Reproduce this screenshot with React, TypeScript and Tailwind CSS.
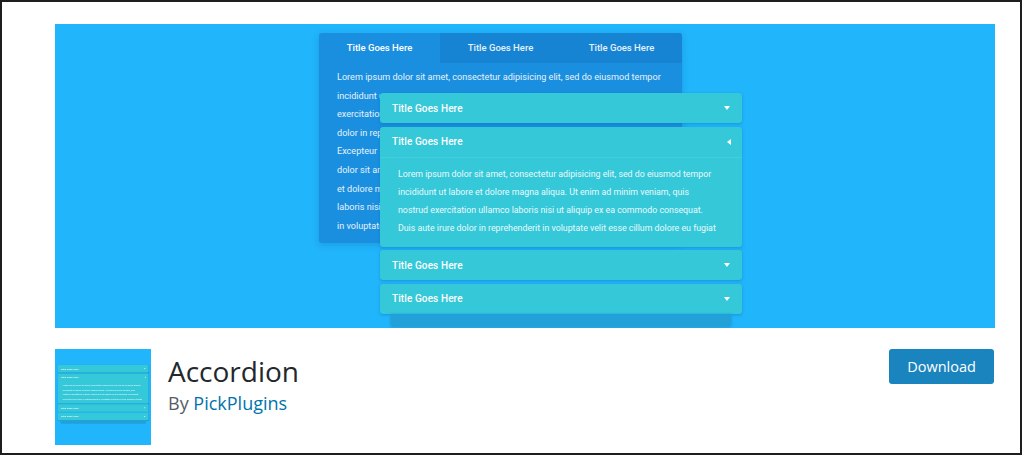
import React from "react";

const tabLines = [
  "Lorem ipsum dolor sit amet, consectetur adipisicing elit, sed do eiusmod tempor",
  "incididunt ut labore et dolore magna aliqua. Ut enim ad minim veniam, quis nostrud",
  "exercitation ullamco laboris nisi ut aliquip ex ea commodo consequat. Duis aute irure",
  "dolor in reprehenderit in voluptate velit esse cillum dolore eu fugiat nulla pariatur.",
  "Excepteur sint occaecat cupidatat non proident, sunt in culpa qui officia deserunt",
  "dolor sit amet, consectetur adipisicing elit, sed do eiusmod tempor incididunt ut",
  "et dolore magna aliqua. Ut enim ad minim veniam, quis nostrud exercitation ullamco",
  "laboris nisi ut aliquip ex ea commodo consequat. Duis aute irure dolor in",
  "in voluptate velit esse cillum dolore eu fugiat nulla pariatur.",
];

const accLines = [
  "Lorem ipsum dolor sit amet, consectetur adipisicing elit, sed do eiusmod tempor",
  "incididunt ut labore et dolore magna aliqua. Ut enim ad minim veniam, quis",
  "nostrud exercitation ullamco laboris nisi ut aliquip ex ea commodo consequat.",
  "Duis aute irure dolor in reprehenderit in voluptate velit esse cillum dolore eu fugiat",
];

const font = { fontFamily: "Roboto, 'Noto Sans', sans-serif" };

function Down() {
  return (
    <span className="w-0 h-0 border-l-[3.5px] border-r-[3.5px] border-t-[4px] border-l-transparent border-r-transparent border-t-white" />
  );
}
function Left() {
  return (
    <span className="w-0 h-0 border-t-[3.5px] border-b-[3.5px] border-r-[4px] border-t-transparent border-b-transparent border-r-white mr-[-1px]" />
  );
}

function Header({ open }: { open?: boolean }) {
  return (
    <div className="h-[30px] flex items-center justify-between pl-[12px] pr-[12px]">
      <span className="text-[10px] font-medium text-white tracking-[0.1px]">Title Goes Here</span>
      {open ? <Left /> : <Down />}
    </div>
  );
}

function Accordion() {
  return (
    <div className="w-[362px]" style={font}>
      <div className="flex flex-col gap-[3.5px]">
        <div className="bg-[#34c8d8] rounded-[3px] shadow-[0_1px_3px_rgba(10,90,160,0.35)]">
          <Header />
        </div>
        <div className="bg-[#34c8d8] rounded-[3px] shadow-[0_1px_3px_rgba(10,90,160,0.35)]">
          <Header open />
          <div className="border-t border-[#3fd0de] pt-[7px] pb-[10px] pl-[18px] pr-[10px] text-[8.8px] leading-[18px] text-[#eafafc]">
            {accLines.map((l, i) => (
              <div key={i} className="whitespace-nowrap overflow-hidden">{l}</div>
            ))}
          </div>
        </div>
        <div className="bg-[#34c8d8] rounded-[3px] shadow-[0_1px_3px_rgba(10,90,160,0.35)]">
          <Header />
        </div>
        <div className="bg-[#34c8d8] rounded-[3px] shadow-[0_1px_3px_rgba(10,90,160,0.35)]">
          <Header />
        </div>
      </div>
      <div className="mx-[10px] h-[14px] bg-[#22a0d8] rounded-b-[4px] blur-[1px]" />
    </div>
  );
}

function Banner() {
  return (
    <div className="relative w-[940px] h-[304px] bg-[#21b5fb] overflow-hidden" style={font}>
      <div className="ml-[264px] mt-[9px] w-[363px] h-[210px] rounded-[3px] bg-[#1a8fe0] overflow-hidden shadow-[0_2px_6px_rgba(10,80,150,0.25)]">
        <div className="flex h-[30px]">
          <div className="w-[121px] flex items-center justify-center text-[9.5px] font-medium text-white">Title Goes Here</div>
          <div className="w-[121px] flex items-center justify-center text-[9.5px] font-medium text-[#e4f1fb] bg-[#1784d3]">Title Goes Here</div>
          <div className="w-[121px] flex items-center justify-center text-[9.5px] font-medium text-[#e4f1fb] bg-[#1784d3]">Title Goes Here</div>
        </div>
        <div className="pt-[5px] pl-[18px] pr-[14px] text-[9.1px] leading-[18.6px] text-[#e6f2fc]">
          {tabLines.map((l, i) => (
            <div key={i} className={i === 0 ? "whitespace-nowrap overflow-hidden" : "w-[43px] whitespace-nowrap overflow-hidden"}>{l}</div>
          ))}
        </div>
      </div>
      <div className="absolute left-[325px] top-[69px]">
        <Accordion />
      </div>
    </div>
  );
}

function Thumb() {
  return (
    <div className="w-[96px] h-[96px] bg-[#21b5fb] overflow-hidden">
      <div className="w-[384px] h-[384px] origin-top-left scale-[0.25] pl-[12px] pt-[64px]">
        <Accordion />
      </div>
    </div>
  );
}

export default function App() {
  return (
    <div className="w-[1022px] h-[455px] bg-white border-2 border-[#1e1e1e] pl-[53px] pt-[22px] overflow-hidden">
      <Banner />
      <div className="w-[940px] mt-[21px] flex justify-between items-start">
        <div className="flex">
          <Thumb />
          <div className="ml-[17px] mt-[5px]" style={{ fontFamily: "'Open Sans', 'Noto Sans', sans-serif" }}>
            <div className="text-[28px] leading-[34px] text-[#23282d]">Accordion</div>
            <div className="mt-[3px] text-[18px] leading-[24px] text-[#555d66]">
              By <span className="text-[#0073aa]">PickPlugins</span>
            </div>
          </div>
        </div>
        <div
          className="w-[105px] h-[35px] rounded-[3px] bg-[#1a84bf] text-white text-[14.5px] flex items-center justify-center mr-[1px]"
          style={{ fontFamily: "'Open Sans', 'Noto Sans', sans-serif" }}
        >
          Download
        </div>
      </div>
    </div>
  );
}
